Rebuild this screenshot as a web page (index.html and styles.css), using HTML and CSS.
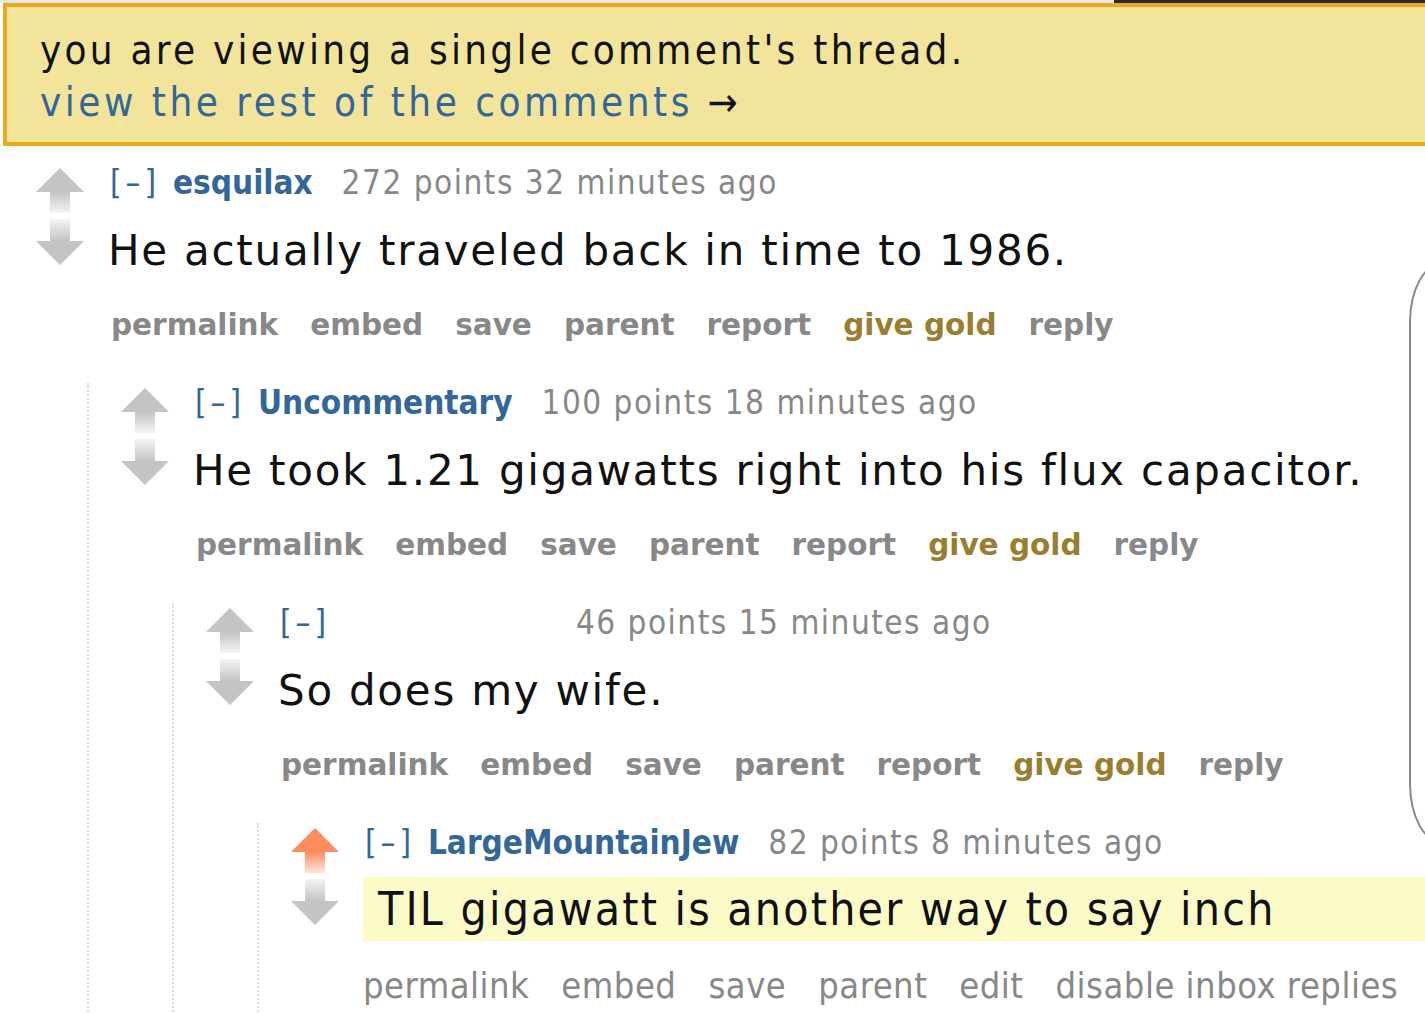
FILE: index.html
```html
<!DOCTYPE html>
<html lang="en">
<head>
    <meta charset="UTF-8">
    <title>single comment thread</title>
    <link rel="stylesheet" href="styles.css">
</head>
<body>
    <div class="topbar"></div>

    <div class="page">
        <!-- Thread notice -->
        <div class="infobar">
            <p>you are viewing a single comment's thread.</p>
            <p><a href="#" class="infolink">view the rest of the comments</a> &rarr;</p>
        </div>

        <div class="comment">
            <div class="row">
                <div class="midcol">
                    <svg class="arrows" width="50" height="98" viewBox="0 0 50 98">
                        <defs>
                            <linearGradient id="fadeUp" x1="0" y1="0" x2="0" y2="1">
                                <stop offset="0" stop-color="#c4c4c4"/>
                                <stop offset="1" stop-color="#f4f4f4"/>
                            </linearGradient>
                            <linearGradient id="fadeDown" x1="0" y1="0" x2="0" y2="1">
                                <stop offset="0" stop-color="#f4f4f4"/>
                                <stop offset="1" stop-color="#c4c4c4"/>
                            </linearGradient>
                        </defs>
                        <polygon points="25,0 49,24 1,24" fill="#c4c4c4"/>
                        <rect x="15" y="24" width="20" height="21" fill="url(#fadeUp)"/>
                        <rect x="15" y="51" width="20" height="22" fill="url(#fadeDown)"/>
                        <polygon points="1,73 49,73 25,97" fill="#c4c4c4"/>
                    </svg>
                </div>
                <div class="entry">
                    <p class="tagline"><a href="#" class="expand">[&ndash;]</a> <a href="#" class="author">esquilax</a> <span class="score">272 points 32 minutes ago</span></p>
                    <div class="md">He actually traveled back in time to 1986.</div>
                    <ul class="buttons">
                        <li>permalink</li>
                        <li>embed</li>
                        <li>save</li>
                        <li>parent</li>
                        <li>report</li>
                        <li class="gold">give gold</li>
                        <li>reply</li>
                    </ul>
                </div>
            </div>

            <div class="child">
                <div class="comment">
                    <div class="row">
                        <div class="midcol">
                            <svg class="arrows" width="50" height="98" viewBox="0 0 50 98">
                                <polygon points="25,0 49,24 1,24" fill="#c4c4c4"/>
                                <rect x="15" y="24" width="20" height="21" fill="url(#fadeUp)"/>
                                <rect x="15" y="51" width="20" height="22" fill="url(#fadeDown)"/>
                                <polygon points="1,73 49,73 25,97" fill="#c4c4c4"/>
                            </svg>
                        </div>
                        <div class="entry">
                            <p class="tagline"><a href="#" class="expand">[&ndash;]</a> <a href="#" class="author">Uncommentary</a> <span class="score">100 points 18 minutes ago</span></p>
                            <div class="md">He took 1.21 gigawatts right into his flux capacitor.</div>
                            <ul class="buttons">
                                <li>permalink</li>
                                <li>embed</li>
                                <li>save</li>
                                <li>parent</li>
                                <li>report</li>
                                <li class="gold">give gold</li>
                                <li>reply</li>
                            </ul>
                        </div>
                    </div>

                    <div class="child">
                        <div class="comment">
                            <div class="row">
                                <div class="midcol">
                                    <svg class="arrows" width="50" height="98" viewBox="0 0 50 98">
                                        <polygon points="25,0 49,24 1,24" fill="#c4c4c4"/>
                                        <rect x="15" y="24" width="20" height="21" fill="url(#fadeUp)"/>
                                        <rect x="15" y="51" width="20" height="22" fill="url(#fadeDown)"/>
                                        <polygon points="1,73 49,73 25,97" fill="#c4c4c4"/>
                                    </svg>
                                </div>
                                <div class="entry">
                                    <p class="tagline"><a href="#" class="expand">[&ndash;]</a> <span class="blank-author"></span> <span class="score">46 points 15 minutes ago</span></p>
                                    <div class="md">So does my wife.</div>
                                    <ul class="buttons">
                                        <li>permalink</li>
                                        <li>embed</li>
                                        <li>save</li>
                                        <li>parent</li>
                                        <li>report</li>
                                        <li class="gold">give gold</li>
                                        <li>reply</li>
                                    </ul>
                                </div>
                            </div>

                            <div class="child">
                                <div class="comment">
                                    <div class="row">
                                        <div class="midcol">
                                            <svg class="arrows" width="50" height="98" viewBox="0 0 50 98">
                                                <defs>
                                                    <linearGradient id="fadeOrange" x1="0" y1="0" x2="0" y2="1">
                                                        <stop offset="0" stop-color="#ff8b60"/>
                                                        <stop offset="1" stop-color="#fde6dc"/>
                                                    </linearGradient>
                                                </defs>
                                                <polygon points="25,0 49,24 1,24" fill="#ff8b60"/>
                                                <rect x="15" y="24" width="20" height="21" fill="url(#fadeOrange)"/>
                                                <rect x="15" y="51" width="20" height="22" fill="url(#fadeDown)"/>
                                                <polygon points="1,73 49,73 25,97" fill="#c4c4c4"/>
                                            </svg>
                                        </div>
                                        <div class="entry">
                                            <p class="tagline"><a href="#" class="expand">[&ndash;]</a> <a href="#" class="author">LargeMountainJew</a> <span class="score">82 points 8 minutes ago</span></p>
                                            <div class="md md-mine">TIL gigawatt is another way to say inch</div>
                                            <ul class="buttons buttons-mine">
                                                <li>permalink</li>
                                                <li>embed</li>
                                                <li>save</li>
                                                <li>parent</li>
                                                <li>edit</li>
                                                <li>disable inbox replies</li>
                                            </ul>
                                        </div>
                                    </div>
                                </div>
                            </div>
                        </div>
                    </div>
                </div>
            </div>
        </div>
    </div>

    <!-- sidebar edge peeking in from the right -->
    <div class="side-edge"></div>
</body>
</html>
```

FILE: styles.css
```css
* {
    box-sizing: border-box;
    margin: 0;
    padding: 0;
}

body {
    background-color: #ffffff;
    font-family: 'DejaVu Sans', Verdana, sans-serif;
    color: #222;
    overflow: hidden;
    position: relative;
}

a {
    text-decoration: none;
}

.topbar {
    height: 3px;
    background: linear-gradient(to right, #e6e6e6 78.2%, #2a2a2a 78.2%);
}

.page {
    width: 1520px;
    padding-left: 3px;
}

.infobar {
    background-color: #f2e59b;
    border: 4px solid #eba91e;
    padding: 17px 36px 14px 33px;
    font-family: 'DejaVu Sans Condensed', 'DejaVu Sans', sans-serif;
    font-stretch: condensed;
    font-size: 40px;
    letter-spacing: 3.25px;
    line-height: 52px;
    color: #111;
}

.infolink {
    color: #336699;
    letter-spacing: 3.5px;
}

.comment {
    display: flex;
    flex-direction: column;
}

.page > .comment {
    margin-top: 17px;
    padding-left: 32px;
}

.row {
    display: flex;
}

.midcol {
    width: 50px;
    margin-right: 23px;
    padding-top: 5px;
}

.arrows {
    display: block;
}

.entry {
    flex: 1;
}

.tagline {
    font-family: 'DejaVu Sans Condensed', 'DejaVu Sans', sans-serif;
    font-stretch: condensed;
    font-size: 33px;
    letter-spacing: 1.5px;
    line-height: 40px;
    color: #888;
    padding-left: 2px;
}

.expand {
    color: #336699;
    letter-spacing: 4px;
    margin-right: 2px;
}

.author {
    color: #336699;
    font-weight: bold;
    letter-spacing: 0;
    margin-right: 18px;
}

.blank-author {
    display: inline-block;
    width: 222px;
}

.md {
    font-size: 42px;
    letter-spacing: 1.75px;
    line-height: 56px;
    margin-top: 20px;
    color: #111;
}

.md-mine {
    background-color: #fcfbc8;
    font-family: 'DejaVu Sans Condensed', 'DejaVu Sans', sans-serif;
    font-stretch: condensed;
    font-size: 46px;
    letter-spacing: 2.2px;
    line-height: 64px;
    margin-top: 14px;
    padding-left: 15px;
}

.buttons {
    list-style: none;
    display: flex;
    gap: 32px;
    margin-top: 26px;
    margin-bottom: 38px;
    padding-left: 3px;
    font-size: 29.5px;
    line-height: 40px;
    font-weight: bold;
    color: #888;
}

.buttons .gold {
    color: #9a7d2e;
}

.buttons-mine {
    margin-top: 25px;
    gap: 32px;
    font-family: 'DejaVu Sans Condensed', 'DejaVu Sans', sans-serif;
    font-stretch: condensed;
    font-weight: normal;
    font-size: 36px;
    letter-spacing: 0.5px;
    padding-left: 0;
}

.child {
    margin-left: 52px;
    border-left: 2px dotted #d4dee8;
    padding-left: 31px;
}

.side-edge {
    position: absolute;
    left: 1409px;
    top: 262px;
    width: 120px;
    height: 582px;
    border: 2px solid #8a8a8a;
    border-radius: 34px 0 0 34px / 60px 0 0 60px;
}
```
